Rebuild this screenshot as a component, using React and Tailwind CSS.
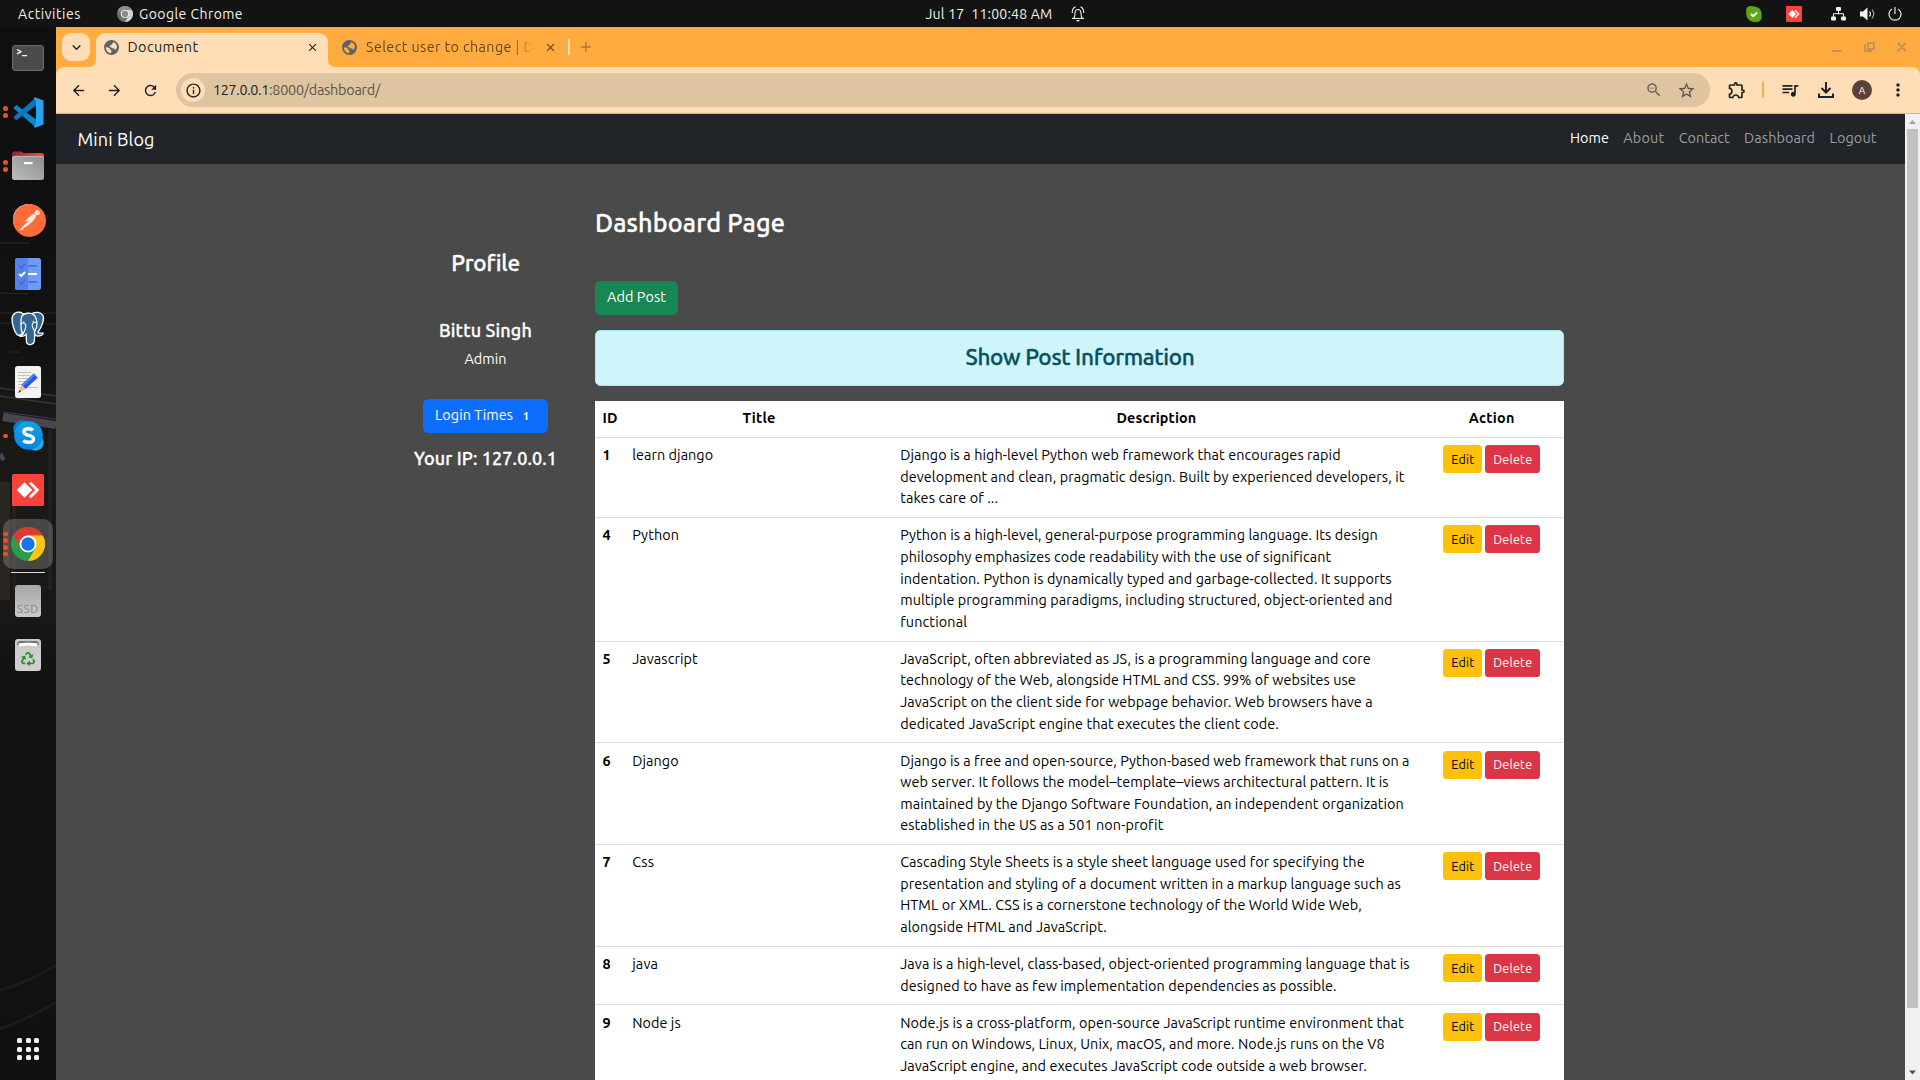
import React, { useLayoutEffect, useRef, useState } from "react";
import {
  MdZoomOut, MdStarBorder, MdOutlineExtension, MdQueueMusic,
  MdMoreVert, MdArrowBack, MdArrowForward, MdRefresh, MdInfoOutline, MdAdd, MdClose, MdKeyboardArrowDown,
} from "react-icons/md";
import { FaRecycle } from "react-icons/fa";
import { SiPostman } from "react-icons/si";

/* Text whose tracking is adjusted so that it spans exactly `w` pixels. */
function Fit({ w, children, className = "" }) {
  const ref = useRef(null);
  const [spacing, setSpacing] = useState(0);
  useLayoutEffect(() => {
    const natural = ref.current.getBoundingClientRect().width;
    setSpacing((w - natural) / String(children).length);
  }, [w, children]);
  return (
    <span ref={ref} className={"inline-block whitespace-pre " + className} style={{ letterSpacing: spacing + "px" }}>
      {children}
    </span>
  );
}

const posts = [
  { id: 1, title: "learn django", tw: 81, lines: [
    ["Django is a high-level Python web framework that encourages rapid", 440.5],
    ["development and clean, pragmatic design. Built by experienced developers, it", 504.3],
    ["takes care of ...", 98]] },
  { id: 4, title: "Python", tw: 47, lines: [
    ["Python is a high-level, general-purpose programming language. Its design", 477.7],
    ["philosophy emphasizes code readability with the use of significant", 430.5],
    ["indentation. Python is dynamically typed and garbage-collected. It supports", 491.5],
    ["multiple programming paradigms, including structured, object-oriented and", 492.3],
    ["functional", 67]] },
  { id: 5, title: "Javascript", tw: 65.5, lines: [
    ["JavaScript, often abbreviated as JS, is a programming language and core", 470.5],
    ["technology of the Web, alongside HTML and CSS. 99% of websites use", 455.7],
    ["JavaScript on the client side for webpage behavior. Web browsers have a", 472.5],
    ["dedicated JavaScript engine that executes the client code.", 378.7]] },
  { id: 6, title: "Django", tw: 46.5, lines: [
    ["Django is a free and open-source, Python-based web framework that runs on a", 509.4],
    ["web server. It follows the model–template–views architectural pattern. It is", 488.5],
    ["maintained by the Django Software Foundation, an independent organization", 503.7],
    ["established in the US as a 501 non-profit", 262.7]] },
  { id: 7, title: "Css", tw: 22, lines: [
    ["Cascading Style Sheets is a style sheet language used for specifying the", 464.5],
    ["presentation and styling of a document written in a markup language such as", 500.7],
    ["HTML or XML. CSS is a cornerstone technology of the World Wide Web,", 461.7],
    ["alongside HTML and JavaScript.", 206.7]] },
  { id: 8, title: "java", tw: 26, lines: [
    ["Java is a high-level, class-based, object-oriented programming language that is", 509.4],
    ["designed to have as few implementation dependencies as possible.", 436.5]] },
  { id: 9, title: "Node js", tw: 48.5, lines: [
    ["Node.js is a cross-platform, open-source JavaScript runtime environment that", 503.5],
    ["can run on Windows, Linux, Unix, macOS, and more. Node.js runs on the V8", 484.4],
    ["JavaScript engine, and executes JavaScript code outside a web browser.", 466.7]] },
];

function ChromeLogo({ size, mono }) {
  const [r, y, g, b, w] = mono
    ? ["#8d8d8d", "#d0d0d0", "#6e6e6e", "#8a8a8a", "#f2f2f2"]
    : ["#dd3b32", "#fcc419", "#2a9d4a", "#1a73e8", "#ffffff"];
  return (
    <svg width={size} height={size} viewBox="0 0 48 48">
      <circle cx="24" cy="24" r="24" fill={g} />
      <path d="M24 24 L3.2 12 A24 24 0 0 1 44.8 12 L24 12 Z" fill={r} />
      <path d="M3.2 12 L13.6 30 L24 24 L24 12 Z" fill={r} />
      <path d="M44.8 12 A24 24 0 0 1 24 48 L34.4 30 L24 24 L24 12 Z" fill={y} />
      <circle cx="24" cy="24" r="12" fill={w} />
      <circle cx="24" cy="24" r="9.4" fill={b} />
    </svg>
  );
}

function Globe({ land }) {
  return (
    <svg width="15" height="15" viewBox="0 0 15 15" className="shrink-0">
      <circle cx="7.5" cy="7.5" r="7.5" fill="#5f6368" />
      <path d="M1.600 7.200 4 7.500Q6 7.700 6 9.500L7.300 10.300V13.300Q2.400 12.500 1.600 7.200z" fill={land} />
      <path d="M9 1.900Q12.500 2.800 13 7 12 9.800 11.200 10 10.800 8.500 9.300 8.300H7.600L7.200 7.200 5.600 6.400 6 5.200H7.600L8 3.800 9 3.300z" fill={land} />
    </svg>
  );
}

function AnyDesk({ size }) {
  return (
    <svg width={size} height={size} viewBox="0 0 32 32">
      <rect width="32" height="32" rx="1.5" fill="#f9423a" />
      <path d="M12.5 8.2 20.3 16l-7.8 7.8L4.700 16z" fill="#fff" />
      <path d="M18 8.700 25.300 16 18 23.300" fill="none" stroke="#fff" strokeWidth="2.800" />
    </svg>
  );
}

const Terminal = () => (
  <svg width="32" height="26" viewBox="0 0 32 26">
    <rect x=".5" y=".5" width="31" height="25" rx="2.500" fill="#4b4b4b" stroke="#6b6b6b" />
    <path d="M5 4.500l4 2.200-4 2.200M10 10.700h5" fill="none" stroke="#fff" strokeWidth="1.300" />
  </svg>
);
const VsCode = () => (
  <svg width="31" height="31" viewBox="0 0 31 31">
    <path d="M.8 10.200 3.400 8 23 22.500V30.500L1 11.800z" fill="#0a84d0" />
    <path d="M.8 21.200 3.400 23.200 23 8.500V.5L1 19.500z" fill="#0b74bd" />
    <path d="M22 .3 30.500 3.500V27.500L22 30.700 20.500 29 23 27.500V3.500L20.500 2z" fill="#27a3f0" />
  </svg>
);
const Files = () => (
  <svg width="32" height="29" viewBox="0 0 32 29" className="mb-px">
    <defs><linearGradient id="fold"><stop offset="0" stopColor="#84264f" /><stop offset="1" stopColor="#e95420" /></linearGradient>
      <linearGradient id="front" x1="1" y1="0" x2="0" y2="1"><stop offset="0" stopColor="#8d8d8d" /><stop offset="1" stopColor="#bdbdbd" /></linearGradient></defs>
    <path d="M0 3Q0 .5 2.500.5H9.500l2 1.500h18Q32 2 32 4.500v9H0z" fill="url(#fold)" />
    <rect y="5" width="32" height="24" rx="2.500" fill="url(#front)" />
    <path d="M.5 7.500Q.5 5.300 3 5.300h26q2.500 0 2.500 2.200" fill="none" stroke="#c8c8c8" strokeWidth=".7" />
    <rect x="12" y="11" width="8.500" height="2.200" fill="#fff" />
  </svg>
);
const Postman = () => (
  <span className="mb-[2px] grid size-[31px] place-items-center rounded-full bg-white"><SiPostman size={33} color="#ff6c37" className="shrink-0" /></span>
);
const Todo = () => (
  <svg width="26" height="32" viewBox="0 0 26 32">
    <rect width="26" height="32" rx="2.500" fill="#6d9bf5" /><path d="M0 2.500Q0 0 2.500 0H13v32H2.500Q0 32 0 29.500z" fill="#5482ea" />
    <path d="M4 8l2.200 2L10 6M13.500 8h8.500M4 24l2.200 2L10 22M13.500 24h8.500" fill="none" stroke="#3e68c4" strokeWidth="1.300" />
    <path d="M4 16l2.200 2L10 14M13 16h9" fill="none" stroke="#fff" strokeWidth="2" />
  </svg>
);
const Postgres = () => (
  <svg width="34" height="35" viewBox="0 0 34 35" stroke="#fff" strokeWidth="1.300" strokeLinejoin="round" strokeLinecap="round">
    <path d="M10 1.500C5 .3 1 3 1 8c0 5 2.500 13 5 15.500 2 1.600 4 .5 5.500-2L14 18V4z" fill="#336791" />
    <path d="M21 2.500c4-2 9-1.500 11 2 1.500 3-.5 10-4.500 16-1 1.500 0 2 4 1.500 1.500 0 .5 2.500-4 3-1.800.2-3-.2-4-1.500L20 12z" fill="#336791" />
    <path d="M10.500 6C12 2 20.500.5 23.500 4.500c2 3 3 8 2 12l-2 4c.2 4 .3 7-.3 10-.6 3-5 4-7 2-1.400-2-.7-6-1-9.500-1.500 2.500-4.700 2.500-6.700 2 1-1 3.500-1 4-2.500-2-1.500-2.700-4-2.500-8 .2-3-.6-5.500.5-8.500z" fill="#336791" />
    <path d="M10.200 12.500c2-1 4.500-.5 4.600 2 .2 3-1 5-2 7M25 11.500c-2-.5-4 .5-3.800 3 .2 2.500 2 4 2.300 6" fill="none" strokeWidth="1.100" />
    <circle cx="12.800" cy="11" r=".7" fill="#fff" stroke="none" /><circle cx="22.300" cy="10.500" r=".7" fill="#fff" stroke="none" />
  </svg>
);
const Editor = () => (
  <svg width="26" height="32" viewBox="0 0 26 32">
    <rect width="26" height="32" rx="2.500" fill="#f3f3f1" />
    <path d="M3 6.500h13M3 9.500h12M3 12.500h11M3 15.500h10M3 18.500h8M3 21.500h20" stroke="#c3c3b8" strokeWidth="1.200" />
    <path d="M18.800 7.500 22.800 11.800 10.500 23 6.500 18.800z" fill="#2c5ad8" />
    <path d="M18.800 7.500 20.300 9 8 20.400 6.500 18.800z" fill="#5380f0" />
    <path d="M6.500 18.800 10.500 23 3.500 26.500z" fill="#f0b880" /><path d="M4.500 24 6 25.500 3.300 27z" fill="#333" />
  </svg>
);
const Skype = () => (
  <svg width="31" height="31" viewBox="0 0 31 31" className="mb-px">
    <defs><linearGradient id="sky" x1="0" y1="0" x2="0" y2="1"><stop offset="0" stopColor="#12a5e8" /><stop offset="1" stopColor="#0a80dc" /></linearGradient></defs>
    <circle cx="9" cy="9" r="8.700" fill="#0a7fd0" /><circle cx="22.500" cy="22.500" r="8.300" fill="#28a8ea" />
    <circle cx="15.500" cy="15.500" r="14.300" fill="url(#sky)" />
    <path d="M20 10.200Q18.500 8.700 15.300 8.700 10.900 8.700 10.900 11.800 10.900 14.500 15.400 15.300 20.500 16.200 20.500 19 20.500 22.300 15.700 22.300 12.200 22.300 10.300 20.500" fill="none" stroke="#fff" strokeWidth="3.400" />
  </svg>
);
const Ssd = () => (
  <div className="flex h-8 w-[26px] items-end justify-center rounded-[3px] bg-linear-to-b from-[#a6a6a6] to-[#cacaca] pb-[1px] text-[11px] leading-[14px] text-[#858585]">
    <Fit w={22}>SSD</Fit>
  </div>
);
const Trash = () => (
  <div className="flex h-8 w-[26px] flex-col items-center rounded-[3px] bg-linear-to-b from-[#c9c9c9] to-[#d0d0d0] pt-[2px]">
    <svg width="22" height="6" viewBox="0 0 22 6"><path d="M0 5Q0 0 3 0h16q3 0 3 5l-2-2.500Q11 1 2 2.500z" fill="#777" /><path d="M2 5.500V2.500q9-1.500 18 0v3q-9-2-18 0z" fill="#fff" /></svg>
    <FaRecycle size={14} color="#2f8f2a" className="mt-[5px]" />
  </div>
);

function DockSlot({ dots = 0, active, children }) {
  return (
    <div className="relative flex h-[54px] w-14 shrink-0 items-center justify-center">
      {active && <div className="absolute inset-x-[3px] inset-y-[2px] rounded-[10px] bg-white/20" />}
      <div className="absolute left-[3px] top-0 flex h-full flex-col justify-center gap-[2.300px]">
        {Array.from({ length: dots }, (_, i) => <span key={i} className="size-[4.500px] rounded-full bg-[#e95420]" />)}
      </div>
      <div className="relative">{children}</div>
    </div>
  );
}

function Dock() {
  return (
    <aside className="relative flex w-14 shrink-0 flex-col overflow-hidden bg-[#0f100f] pt-1">
      <svg className="absolute inset-0" width="56" height="1053" viewBox="0 27 56 1053" fill="none">
        <defs><linearGradient id="wall" x1="0" y1="0" x2="0" y2="1">
          <stop offset="0" stopColor="#0e0f0e" /><stop offset=".3" stopColor="#101110" /><stop offset=".36" stopColor="#191817" />
          <stop offset=".5" stopColor="#1a1918" /><stop offset=".56" stopColor="#191817" /><stop offset=".6" stopColor="#131312" /><stop offset="1" stopColor="#10100f" />
        </linearGradient></defs>
        <rect y="27" width="56" height="1053" fill="url(#wall)" />
        <path d="M0 243h30M0 293l28 1M0 313h56M0 323l56 1M8 352h12" stroke="#3b3527" strokeWidth="1.200" opacity=".7" />
        <path d="M0 388l56 8M0 396l56 8" stroke="#38342e" strokeWidth="1.500" />
        <path d="M3 417 56 425" stroke="#4a4650" strokeWidth="8" /><path d="M3 412 56 419" stroke="#463466" strokeWidth="1" />
        <path d="M0 458l4-2" stroke="#4a4258" strokeWidth="7" />
        <path d="M0 482h10v118H0z" fill="#292520" /><path d="M50 430v160M14 500v90" stroke="#242220" strokeWidth="3" />
        <path d="M0 990Q30 982 56 965M0 1029Q30 1018 56 1002" stroke="#1c1b17" strokeWidth="3" />
      </svg>
      <DockSlot><Terminal /></DockSlot>
      <DockSlot dots={2}><VsCode /></DockSlot>
      <DockSlot dots={2}><Files /></DockSlot>
      <DockSlot><Postman /></DockSlot>
      <DockSlot><Todo /></DockSlot>
      <DockSlot><Postgres /></DockSlot>
      <DockSlot><Editor /></DockSlot>
      <DockSlot dots={1}><Skype /></DockSlot>
      <DockSlot><AnyDesk size={32} /></DockSlot>
      <DockSlot dots={4} active><ChromeLogo size={34} /></DockSlot>
      <div className="relative mx-[11px] mb-px mt-px h-px shrink-0 bg-[#dcdcdc]" />
      <DockSlot><Ssd /></DockSlot>
      <DockSlot><Trash /></DockSlot>
      <div className="relative mx-auto mb-5 mt-auto grid grid-cols-3 gap-[3.500px]">
        {Array.from({ length: 9 }, (_, i) => <span key={i} className="size-[5px] rounded-[1.500px] bg-[#f2f2f2]" />)}
      </div>
    </aside>
  );
}

function TopBar() {
  return (
    <header className="flex h-[27px] shrink-0 items-center bg-[#131313] text-[14px] text-[#f0f0f0]">
      <div className="flex flex-1 items-center pl-[18px]">
        <Fit w={63} className="pt-[2px]">Activities</Fit>
        <span className="ml-9 mr-[6px]"><ChromeLogo size={16} mono /></span>
        <Fit w={104} className="pt-[2px]">Google Chrome</Fit>
      </div>
      <div className="flex items-center gap-[18px] pl-[90px]">
        <Fit w={127} className="pt-[2px]">Jul 17  11:00:48 AM</Fit>
        <svg width="14" height="16" viewBox="0 0 14 16" fill="none" stroke="#eee" strokeWidth="1.100">
          <path d="M1 12.500h12M2.500 12.500Q4 11 4 7.500 4 3.500 7 3.500t3 4q0 3.500 1.500 5M1.300 7Q1 2.500 4.500.8M12.700 7Q13 2.500 9.500.8" />
          <path d="M5 14h4l-2 2z" fill="#eee" stroke="none" />
        </svg>
      </div>
      <div className="flex flex-1 items-center justify-end pr-[18px]">
        <svg width="16" height="16" viewBox="0 0 16 16"><path d="M5 0q4 0 7 1.500Q16 4 15.500 9q1 6-4.500 7-5 .5-8-2Q-.5 11 .3 6-.5 0 5 0z" fill="#5fa518" /><path d="M5 8l2.200 2.200L11 6.300" fill="none" stroke="#fff" strokeWidth="1.800" /></svg>
        <span className="ml-6 mr-[29px]"><AnyDesk size={16} /></span>
        <svg width="15" height="14" viewBox="0 0 15 14" fill="#f2f2f2"><rect x="5" y="0" width="5" height="4" rx="1" /><rect x="0" y="9.500" width="5" height="4" rx="1" /><rect x="10" y="9.500" width="5" height="4" rx="1" /><path d="M7.500 4v3M2.500 10V6.700h10V10" fill="none" stroke="#f2f2f2" /></svg>
        <svg className="ml-[14px]" width="15" height="14" viewBox="0 0 15 14"><path d="M0 4.500h3L7.500.5v13L3 9.500H0z" fill="#f2f2f2" /><path d="M9.500 4.500q2 2.500 0 5" fill="none" stroke="#f2f2f2" strokeWidth="1.200" /><path d="M12 2.500q3.500 4.500 0 9" fill="none" stroke="#aaa" strokeWidth="1.200" /></svg>
        <svg className="ml-[13px]" width="14" height="14" viewBox="0 0 14 14" fill="none" stroke="#e6e6e6" strokeWidth="1.200"><path d="M7 0v7M4 2A6 6 0 1 0 10 2" /></svg>
      </div>
    </header>
  );
}

function TabStrip() {
  return (
    <div className="flex h-10 shrink-0 items-start bg-[#ffab40] pl-[6px] pt-[6px]">
      <div className="grid size-7 place-items-center rounded-[9px] bg-[#ffdeb7] text-[#202124]"><MdKeyboardArrowDown size={17} /></div>
      <div className="relative ml-[6px] flex h-[34px] w-[232px] items-center rounded-t-[9px] bg-[#ffdeb7] px-2 pb-[6px]">
        <svg className="absolute -left-2 bottom-0" width="8" height="8"><path d="M8 0v8H0Q8 8 8 0z" fill="#ffdeb7" /></svg>
        <svg className="absolute -right-2 bottom-0" width="8" height="8"><path d="M0 0v8h8Q0 8 0 0z" fill="#ffdeb7" /></svg>
        <Globe land="#ffdeb7" />
        <Fit w={71} className="ml-[8.500px] pt-[2px] text-[14.400px] text-[#202124]">Document</Fit>
        <MdClose size={13} className="ml-auto mr-[1.500px] text-[#202124]" />
      </div>
      <div className="flex h-7 items-center pl-[14px]">
        <Globe land="#ffab40" />
        <span className="ml-[9px] w-[168px] overflow-hidden bg-linear-to-r from-[#5e4420] from-85% to-[#ffab40] bg-clip-text pt-px text-[14.400px] text-transparent">
          <Fit w={168}>Select user to change | D</Fit>
        </span>
        <MdClose size={13} className="ml-[9.500px] text-[#5e4420]" />
        <span className="ml-[11.500px] h-4 w-[1.500px] bg-[#ffdeb7]" />
        <MdAdd size={16} className="ml-[8px] text-[#a87636]" />
      </div>
      <div className="ml-auto flex h-7 items-center pr-[13px]">
        <svg width="75" height="10" viewBox="0 0 75 10" fill="none" stroke="#c59253" strokeWidth="2">
          <path d="M0 9h10M36 1h6v6h-6zM33 2.500V9h7M65.500.8l8.500 8.500M74 .8l-8.500 8.500" />
        </svg>
      </div>
    </div>
  );
}

function Toolbar() {
  return (
    <div className="shrink-0 bg-[#ffab40]">
      <div className="flex h-[47px] items-center rounded-t-[8px] border-b border-[#cdb496] bg-[#ffdeb7] text-[#202124]">
        <div className="flex w-[120px] items-center gap-[19px] pl-[13.500px]">
          <MdArrowBack size={17} /><MdArrowForward size={17} /><MdRefresh size={17} />
        </div>
        <div className="flex h-[34px] w-[1534px] items-center rounded-full bg-[#dfc4a1] pl-[5px] pr-[14.500px]">
          <span className="grid size-6 place-items-center rounded-full bg-[#ffdeb7]"><MdInfoOutline size={17} /></span>
          <span className="ml-[8px] pt-[2px] text-[14.400px]"><Fit w={56}>127.0.0.1</Fit><Fit w={111} className="text-[#5c5347]">:8000/dashboard/</Fit></span>
          <MdZoomOut size={18} className="ml-auto text-[#6e6559]" />
          <MdStarBorder size={19} className="ml-[14px] text-[#5c5347]" />
        </div>
        <MdOutlineExtension size={20} className="ml-[17px]" />
        <span className="ml-[15px] h-4 w-[2px] bg-[#ffab40]" />
        <MdQueueMusic size={20} className="ml-[16px]" />
        <svg className="ml-[18px]" width="16" height="16" viewBox="0 0 16 16" fill="none" stroke="#202124" strokeWidth="2"><path d="M8 0v10M3.500 6 8 10.500 12.500 6M1 11.500V15h14v-3.500" /></svg>
        <span className="ml-[18px] grid size-5 place-items-center rounded-full bg-[#5d4037] text-[10px] text-white">A</span>
        <MdMoreVert size={20} className="ml-[16px]" />
      </div>
    </div>
  );
}

const nav = [["Home", 39], ["About", 41], ["Contact", 51], ["Dashboard", 71], ["Logout", 47]];

function Navbar() {
  return (
    <nav className="flex h-[50px] shrink-0 items-center justify-between bg-[#212529] pl-[21.600px] pr-[28.500px] text-[14.400px]">
      <Fit w={77} className="pb-px text-lg text-white">Mini Blog</Fit>
      <div className="flex gap-[14.400px]">
        {nav.map(([t, w], i) => <Fit key={t} w={w} className={i ? "text-[#9b9d9f]" : "text-white"}>{t}</Fit>)}
      </div>
    </nav>
  );
}

function Row({ post }) {
  return (
    <div className="grid grid-cols-[29.600px_268px_526.700px_1fr] border-b border-[#dee2e6] py-[7.200px] leading-[21.600px]">
      <div className="pl-[7.600px] font-bold">{post.id}</div>
      <div className="pl-[7.600px]"><Fit w={post.tw}>{post.title}</Fit></div>
      <div className="pl-[7.600px]">
        {post.lines.map(([t, w]) => <div key={t} className="h-[21.600px]"><Fit w={w}>{t}</Fit></div>)}
      </div>
      <div className="flex gap-[3px] pl-[24px] text-[12.600px]">
        <span className="flex h-7 w-[39px] items-center justify-center rounded-[3.600px] bg-[#ffc107] pt-px"><Fit w={23}>Edit</Fit></span>
        <span className="flex h-7 w-[55px] items-center justify-center rounded-[3.600px] bg-[#dc3545] pt-px text-white"><Fit w={39}>Delete</Fit></span>
      </div>
    </div>
  );
}

function PostsTable() {
  return (
    <div className="mt-[15px] shrink-0 bg-white text-[14.400px] text-black">
      <div className="grid h-[37.100px] grid-cols-[29.600px_268px_526.700px_1fr] border-b border-[#dee2e6] pt-[6.500px] text-center font-bold leading-[21.600px]">
        <span className="pl-[7.600px] text-left"><Fit w={15}>ID</Fit></span>
        <span className="pl-px"><Fit w={33}>Title</Fit></span>
        <span className="pl-px"><Fit w={80}>Description</Fit></span>
        <span><Fit w={46}>Action</Fit></span>
      </div>
      {posts.map((p) => <Row key={p.id} post={p} />)}
    </div>
  );
}

function Page() {
  return (
    <div className="flex min-h-0 flex-1 overflow-hidden">
      <div className="flex min-w-0 flex-1 flex-col overflow-hidden bg-[#4a4a4a] text-white">
        <Navbar />
        <main className="flex min-h-0 flex-1 overflow-hidden">
          <section className="ml-[320px] flex w-[219px] shrink-0 flex-col items-center pt-[84px] text-center">
            <h4 className="h-[68px] text-[22.500px] font-medium leading-[30px] [-webkit-text-stroke:0.35px]"><Fit w={68}>Profile</Fit></h4>
            <h5 className="h-[29px] text-lg font-medium leading-[28px] [-webkit-text-stroke:0.3px]"><Fit w={93}>Bittu Singh</Fit></h5>
            <p className="h-[54px] text-[14.400px] leading-[28px]"><Fit w={42}>Admin</Fit></p>
            <div className="flex h-[34px] w-[125px] items-center rounded-[5.400px] bg-[#0d6efd] pl-3 text-[14.400px]">
              <Fit w={78}>Login Times</Fit><span className="ml-[10px] pt-px text-[10.800px] font-bold">1</span>
            </div>
            <h5 className="pt-[11px] text-lg font-medium leading-[28px] [-webkit-text-stroke:0.3px]"><Fit w={143}>Your IP: 127.0.0.1</Fit></h5>
          </section>
          <section className="flex w-[969px] shrink-0 flex-col pt-[43px]">
            <h3 className="h-[74px] shrink-0 text-[25.200px] font-medium leading-[32px] [-webkit-text-stroke:0.35px]"><Fit w={190}>Dashboard Page</Fit></h3>
            <div className="flex h-[34px] w-[83px] shrink-0 items-center justify-center rounded-[5.400px] bg-[#198754] text-[14.400px]"><Fit w={59}>Add Post</Fit></div>
            <div className="mt-[15px] flex h-14 shrink-0 items-center justify-center rounded-[5.400px] border border-[#9eeaf9] bg-[#cff4fc] pb-[3px] pl-px text-[22.500px] font-medium text-[#055160] [-webkit-text-stroke:0.35px]"><Fit w={229}>Show Post Information</Fit></div>
            <PostsTable />
          </section>
        </main>
      </div>
      <div className="flex w-[15px] shrink-0 flex-col items-center bg-[#f1f1f1]">
        <svg width="15" height="15" className="shrink-0"><path d="M4 10l3.500-4L11 10z" fill="#a3a3a3" /></svg>
        <div className="h-[879px] w-[11px] bg-[#c1c1c1]" />
        <svg width="15" height="15" className="mt-auto shrink-0"><path d="M4 5.500l3.500 4 3.500-4z" fill="#505050" /></svg>
      </div>
    </div>
  );
}

export default function App() {
  return (
    <div className="flex h-[1080px] w-[1920px] flex-col overflow-hidden font-['Ubuntu','Noto_Sans',sans-serif]">
      <TopBar />
      <div className="flex min-h-0 flex-1">
        <Dock />
        <div className="flex min-w-0 flex-1 flex-col">
          <TabStrip />
          <Toolbar />
          <Page />
        </div>
      </div>
    </div>
  );
}
